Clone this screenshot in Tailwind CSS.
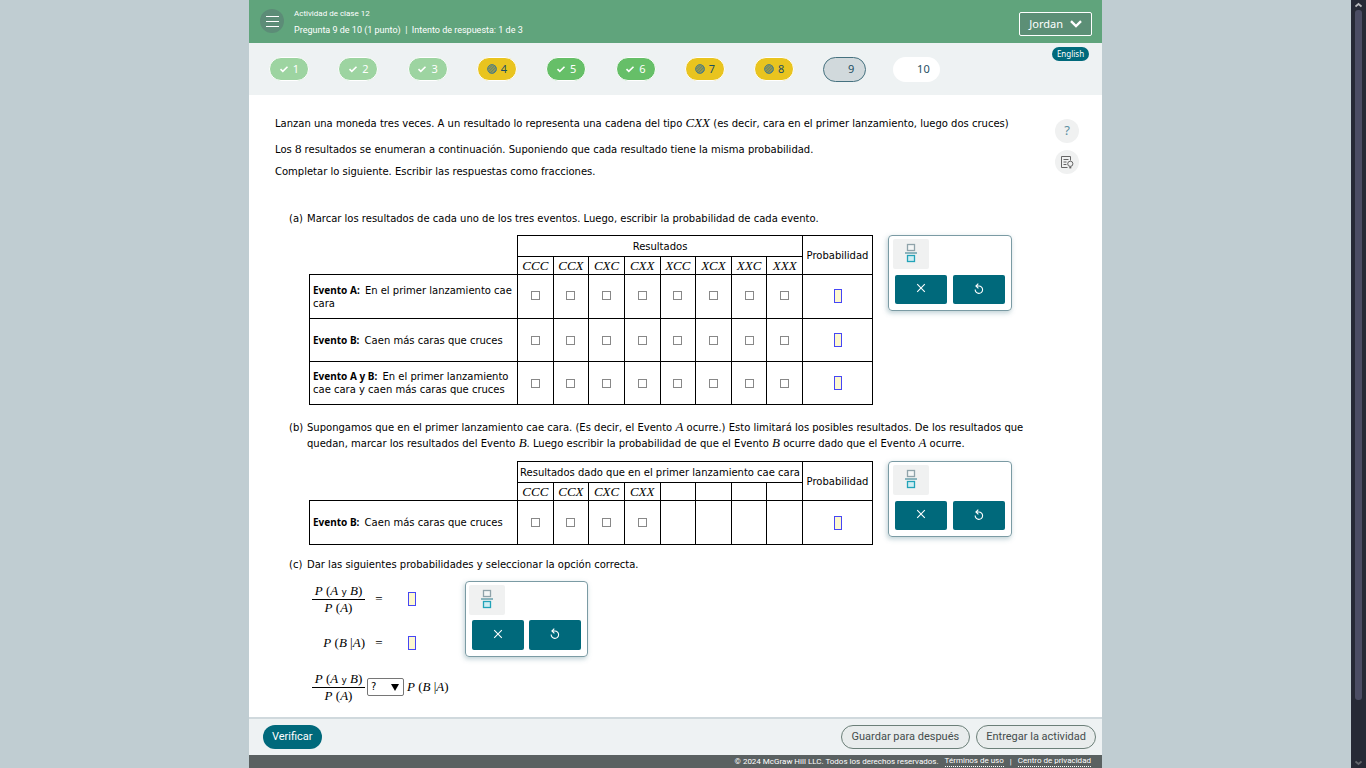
<!DOCTYPE html>
<html lang="es">
<head>
<meta charset="utf-8">
<meta name="viewport" content="width=device-width, initial-scale=1">
<title>Actividad de clase 12</title>
<script src="https://cdn.jsdelivr.net/npm/@tailwindcss/browser@4"></script>
</head>
<body class="flex h-screen bg-[#c0cdd2] font-['DejaVu_Sans',sans-serif] text-[10px] text-black">
<svg class="hidden" aria-hidden="true">
  <symbol id="check" viewBox="0 0 10 8"><path d="M1.500 4.200l2.300 2.100L8.500 1.700" fill="none" stroke="currentColor" stroke-width="1.600"/></symbol>
  <symbol id="hatch" viewBox="0 0 10 10"><circle cx="5" cy="5" r="4.4" fill="#9b9b4c" stroke="#4d7d83"/><path d="M1.5 5L5 1.5M1.3 8L8 1.3M3 9.2L9.2 3M6 9.2L9.2 6" stroke="#4d7d83" stroke-width=".9"/></symbol>
  <symbol id="frac" viewBox="0 0 12 20"><rect x="2.5" y="1.5" width="7" height="6" fill="#f4f6f6" stroke="#8fa3aa" stroke-width="1.3"/><path d="M0 10h12" stroke="#5f9aa6" stroke-width="1.4"/><rect x="2.5" y="12.5" width="7" height="6" fill="#cfeef3" stroke="#22a3b8" stroke-width="1.3"/></symbol>
  <symbol id="cross" viewBox="0 0 10 10"><path d="M1.2 1.2l7.6 7.6M8.8 1.2L1.2 8.8" stroke="currentColor" stroke-width="1.1"/></symbol>
  <symbol id="undo" viewBox="0 0 10 11"><path d="M1.200 6.500a3.700 3.700 0 1 0 3.700-3.500H2M4.300.6L1.900 3l2.500 2.400" fill="none" stroke="currentColor" stroke-width="1.1"/></symbol>
</svg>

<div class="flex h-full min-w-0 flex-1 justify-center">
<div class="flex h-full w-full max-w-[853px] flex-col bg-white">

  <header class="flex h-[43px] shrink-0 items-center bg-[#60a47c] pr-[10px] pl-[11px] font-['Roboto',sans-serif] text-white">
    <button aria-label="Menú" class="mb-[1px] flex size-6 items-center justify-center rounded-full bg-[#5c8c77]">
      <svg class="size-[13px]" viewBox="0 0 13 13"><path d="M0 1.500h13M0 6.500h13M0 11.500h13" stroke="#fff" stroke-width="1.2"/></svg>
    </button>
    <div class="ml-[10px] flex-1 leading-4">
      <h1 class="text-[8px]">Actividad de clase 12</h1>
      <p class="text-[9px]">Pregunta 9 de 10 (1 punto) &nbsp;|&nbsp; Intento de respuesta: 1 de 3</p>
    </div>
    <button class="mt-[5px] flex h-6 items-center gap-[7px] rounded-[2px] border border-white bg-[#5c8f76] px-[9px] font-['Noto_Sans',sans-serif] text-[11px]">Jordan
      <svg class="h-2 w-3" viewBox="0 0 12 8"><path d="M1 1.2l5 4.8 5-4.8" fill="none" stroke="#fff" stroke-width="2.4"/></svg>
    </button>
  </header>

  <nav aria-label="Preguntas" class="flex h-[52px] shrink-0 justify-between bg-[#eef2f3] pr-[13px] pl-[20px] font-['Noto_Sans',sans-serif] text-[11px]">
    <div class="grid w-[693px] grid-cols-10 items-center justify-items-start">
      <a href="#" class="flex h-6 w-10 items-center justify-center gap-1 rounded-full border border-white bg-[#9dd4a1] text-white"><svg class="h-2 w-[10px]"><use href="#check"/></svg>1</a>
      <a href="#" class="flex h-6 w-10 items-center justify-center gap-1 rounded-full border border-white bg-[#9dd4a1] text-white"><svg class="h-2 w-[10px]"><use href="#check"/></svg>2</a>
      <a href="#" class="flex h-6 w-10 items-center justify-center gap-1 rounded-full border border-white bg-[#9dd4a1] text-white"><svg class="h-2 w-[10px]"><use href="#check"/></svg>3</a>
      <a href="#" class="flex h-6 w-10 items-center justify-center gap-1 rounded-full border border-white bg-[#e9c41f] text-[#1d4f63]"><svg class="size-[10px]"><use href="#hatch"/></svg>4</a>
      <a href="#" class="flex h-6 w-10 items-center justify-center gap-1 rounded-full border border-white bg-[#66bf68] text-white"><svg class="h-2 w-[10px]"><use href="#check"/></svg>5</a>
      <a href="#" class="flex h-6 w-10 items-center justify-center gap-1 rounded-full border border-white bg-[#66bf68] text-white"><svg class="h-2 w-[10px]"><use href="#check"/></svg>6</a>
      <a href="#" class="flex h-6 w-10 items-center justify-center gap-1 rounded-full border border-white bg-[#e9c41f] text-[#1d4f63]"><svg class="size-[10px]"><use href="#hatch"/></svg>7</a>
      <a href="#" class="flex h-6 w-10 items-center justify-center gap-1 rounded-full border border-white bg-[#e9c41f] text-[#1d4f63]"><svg class="size-[10px]"><use href="#hatch"/></svg>8</a>
      <a href="#" aria-current="page" class="flex h-[25px] w-[43px] items-center justify-end rounded-full border border-[#45717f] bg-[#d1d9dc] pr-[11px] text-[#1d4f63]">9</a>
      <a href="#" class="flex h-[25px] w-[47px] items-center justify-end rounded-full bg-white pr-[10px] text-[#1d4f63]">10</a>
    </div>
    <button class="mt-1 flex h-[14px] w-[37px] items-center justify-center rounded-full bg-[#00697b] text-[8px] text-white">English</button>
  </nav>

  <main class="flex min-h-0 flex-1 overflow-hidden pr-[23px] pl-[26px]">
    <div class="min-w-0 flex-1 pt-4 leading-4">
      <p class="leading-[26px] whitespace-nowrap">Lanzan una moneda tres veces. A un resultado lo representa una cadena del tipo <i class="font-['Liberation_Serif',serif] text-[13px] leading-none">CXX</i> (es decir, cara en el primer lanzamiento, luego dos cruces)</p>
      <p class="leading-[26px]">Los <span class="font-['Liberation_Serif',serif] text-[13px] leading-none">8</span> resultados se enumeran a continuación. Suponiendo que cada resultado tiene la misma probabilidad.</p>
      <p class="leading-[18px]">Completar lo siguiente. Escribir las respuestas como fracciones.</p>

      <section class="mt-[30px] flex pl-[14px]">
        <span class="w-[18px] shrink-0">(a)</span>
        <div>
          <p>Marcar los resultados de cada uno de los tres eventos. Luego, escribir la probabilidad de cada evento.</p>
          <div class="mt-2 flex items-start gap-[15px] pl-[2px]">
            <table class="w-[564px] shrink-0 table-fixed border-collapse text-center leading-[13px] [&_th]:p-0 [&_th]:font-normal [&_b]:mr-[2px] [&_b]:font-['Noto_Sans',sans-serif] [&_b]:leading-none [&_td]:border [&_td]:border-black [&_td]:p-0">
              <colgroup><col class="w-[208px]"><col span="8"><col class="w-[70px]"></colgroup>
              <thead class="[&_th]:border-black">
                <tr class="h-[21px]"><th rowspan="2"></th><th colspan="8" class="border">Resultados</th><th rowspan="2" class="border">Probabilidad</th></tr>
                <tr class="h-[18px] font-['Liberation_Serif',serif] text-[13px] italic [&_th]:border"><th>CCC</th><th>CCX</th><th>CXC</th><th>CXX</th><th>XCC</th><th>XCX</th><th>XXC</th><th>XXX</th></tr>
              </thead>
              <tbody class="[&_input]:mx-auto [&_input]:block [&_input]:appearance-none [&_input]:border">
                <tr class="h-11 [&_td]:pb-[2px] [&_[type=checkbox]]:size-[9px] [&_[type=checkbox]]:border-[#888] [&_[type=text]]:h-[14px] [&_[type=text]]:w-[8px] [&_[type=text]]:border-[#4646f5] [&_[type=text]]:bg-[#fdf8cf]">
                  <th scope="row" class="border border-black text-left"><div class="pl-[3px]"><b>Evento A:</b> En el primer lanzamiento cae cara</div></th>
                  <td><input type="checkbox" aria-label="Evento A, CCC"></td><td><input type="checkbox" aria-label="Evento A, CCX"></td><td><input type="checkbox" aria-label="Evento A, CXC"></td><td><input type="checkbox" aria-label="Evento A, CXX"></td><td><input type="checkbox" aria-label="Evento A, XCC"></td><td><input type="checkbox" aria-label="Evento A, XCX"></td><td><input type="checkbox" aria-label="Evento A, XXC"></td><td><input type="checkbox" aria-label="Evento A, XXX"></td>
                  <td><input type="text" aria-label="Probabilidad del evento A"></td>
                </tr>
                <tr class="h-[43px] [&_[type=checkbox]]:size-[9px] [&_[type=checkbox]]:border-[#888] [&_[type=text]]:h-[14px] [&_[type=text]]:w-[8px] [&_[type=text]]:border-[#4646f5] [&_[type=text]]:bg-[#fdf8cf]">
                  <th scope="row" class="border border-black text-left"><div class="pl-[3px]"><b>Evento B:</b> Caen más caras que cruces</div></th>
                  <td><input type="checkbox" aria-label="Evento B, CCC"></td><td><input type="checkbox" aria-label="Evento B, CCX"></td><td><input type="checkbox" aria-label="Evento B, CXC"></td><td><input type="checkbox" aria-label="Evento B, CXX"></td><td><input type="checkbox" aria-label="Evento B, XCC"></td><td><input type="checkbox" aria-label="Evento B, XCX"></td><td><input type="checkbox" aria-label="Evento B, XXC"></td><td><input type="checkbox" aria-label="Evento B, XXX"></td>
                  <td><input type="text" aria-label="Probabilidad del evento B"></td>
                </tr>
                <tr class="h-[43px] [&_[type=checkbox]]:size-[9px] [&_[type=checkbox]]:border-[#888] [&_[type=text]]:h-[14px] [&_[type=text]]:w-[8px] [&_[type=text]]:border-[#4646f5] [&_[type=text]]:bg-[#fdf8cf]">
                  <th scope="row" class="border border-black text-left"><div class="pl-[3px]"><b>Evento A y B:</b> En el primer lanzamiento cae cara y caen más caras que cruces</div></th>
                  <td><input type="checkbox" aria-label="Evento A y B, CCC"></td><td><input type="checkbox" aria-label="Evento A y B, CCX"></td><td><input type="checkbox" aria-label="Evento A y B, CXC"></td><td><input type="checkbox" aria-label="Evento A y B, CXX"></td><td><input type="checkbox" aria-label="Evento A y B, XCC"></td><td><input type="checkbox" aria-label="Evento A y B, XCX"></td><td><input type="checkbox" aria-label="Evento A y B, XXC"></td><td><input type="checkbox" aria-label="Evento A y B, XXX"></td>
                  <td><input type="text" aria-label="Probabilidad del evento A y B"></td>
                </tr>
              </tbody>
            </table>
            <div class="w-[124px] shrink-0 rounded-[4px] border border-[#7b9ba4] pt-[3px] pb-[6px] pl-1 shadow-[-1px_2px_5px_rgba(70,120,135,0.35)]">
              <button aria-label="Fracción" class="flex h-[30px] w-9 items-center justify-center rounded-[2px] bg-[#f0f1f1] pb-[2px]"><svg class="h-5 w-3"><use href="#frac"/></svg></button>
              <div class="mt-[6px] flex gap-[6px] pl-[2px] text-white">
                <button aria-label="Borrar" class="flex h-[29px] w-[52px] items-center justify-center rounded-[2px] bg-[#00697b] pb-[3px]"><svg class="size-[10px]"><use href="#cross"/></svg></button>
                <button aria-label="Deshacer" class="flex h-[29px] w-[52px] items-center justify-center rounded-[2px] bg-[#00697b] pb-[3px]"><svg class="h-[11px] w-[10px]"><use href="#undo"/></svg></button>
              </div>
            </div>
          </div>
        </div>
      </section>

      <section class="mt-[15px] flex pl-[14px]">
        <span class="w-[18px] shrink-0">(b)</span>
        <div>
          <p class="whitespace-nowrap [&_i]:font-['Liberation_Serif',serif] [&_i]:text-[13px] [&_i]:leading-none">Supongamos que en el primer lanzamiento cae cara. (Es decir, el Evento <i>A</i> ocurre.) Esto limitará los posibles resultados. De los resultados que<br>quedan, marcar los resultados del Evento <i>B</i>. Luego escribir la probabilidad de que el Evento <i>B</i> ocurre dado que el Evento <i>A</i> ocurre.</p>
          <div class="mt-[9px] flex items-start gap-[15px] pl-[2px]">
            <table class="w-[564px] shrink-0 table-fixed border-collapse text-center leading-[13px] [&_th]:p-0 [&_th]:font-normal [&_b]:mr-[2px] [&_b]:font-['Noto_Sans',sans-serif] [&_b]:leading-none [&_td]:border [&_td]:border-black [&_td]:p-0">
              <colgroup><col class="w-[208px]"><col span="8"><col class="w-[70px]"></colgroup>
              <thead class="[&_th]:border-black">
                <tr class="h-[21px]"><th rowspan="2"></th><th colspan="8" class="border whitespace-nowrap">Resultados dado que en el primer lanzamiento cae cara</th><th rowspan="2" class="border">Probabilidad</th></tr>
                <tr class="h-[18px] font-['Liberation_Serif',serif] text-[13px] italic [&_th]:border"><th>CCC</th><th>CCX</th><th>CXC</th><th>CXX</th><th></th><th></th><th></th><th></th></tr>
              </thead>
              <tbody class="[&_input]:mx-auto [&_input]:block [&_input]:appearance-none [&_input]:border">
                <tr class="h-11 [&_[type=checkbox]]:size-[9px] [&_[type=checkbox]]:border-[#888] [&_[type=text]]:h-[14px] [&_[type=text]]:w-[8px] [&_[type=text]]:border-[#4646f5] [&_[type=text]]:bg-[#fdf8cf]">
                  <th scope="row" class="border border-black text-left"><div class="pl-[3px]"><b>Evento B:</b> Caen más caras que cruces</div></th>
                  <td><input type="checkbox" aria-label="Evento B dado A, CCC"></td><td><input type="checkbox" aria-label="Evento B dado A, CCX"></td><td><input type="checkbox" aria-label="Evento B dado A, CXC"></td><td><input type="checkbox" aria-label="Evento B dado A, CXX"></td><td></td><td></td><td></td><td></td>
                  <td><input type="text" aria-label="Probabilidad del evento B dado A"></td>
                </tr>
              </tbody>
            </table>
            <div class="w-[124px] shrink-0 rounded-[4px] border border-[#7b9ba4] pt-[3px] pb-[6px] pl-1 shadow-[-1px_2px_5px_rgba(70,120,135,0.35)]">
              <button aria-label="Fracción" class="flex h-[30px] w-9 items-center justify-center rounded-[2px] bg-[#f0f1f1] pb-[2px]"><svg class="h-5 w-3"><use href="#frac"/></svg></button>
              <div class="mt-[6px] flex gap-[6px] pl-[2px] text-white">
                <button aria-label="Borrar" class="flex h-[29px] w-[52px] items-center justify-center rounded-[2px] bg-[#00697b] pb-[3px]"><svg class="size-[10px]"><use href="#cross"/></svg></button>
                <button aria-label="Deshacer" class="flex h-[29px] w-[52px] items-center justify-center rounded-[2px] bg-[#00697b] pb-[3px]"><svg class="h-[11px] w-[10px]"><use href="#undo"/></svg></button>
              </div>
            </div>
          </div>
        </div>
      </section>

      <section class="mt-3 flex pl-[14px]">
        <span class="w-[18px] shrink-0">(c)</span>
        <div>
          <p>Dar las siguientes probabilidades y seleccionar la opción correcta.</p>
          <div class="mt-1 flex items-start pl-[5px] font-['Liberation_Serif',serif] text-[13px] [&_i]:leading-none">
            <div class="w-[135px] shrink-0">
              <div class="flex h-11 items-center">
                <div class="w-[53px] shrink-0 text-center leading-4"><div class="border-b border-black whitespace-nowrap"><i>P</i> (<i>A</i> <span class="font-['DejaVu_Sans',sans-serif] text-[9px] leading-none">y</span> <i>B</i>)</div><div><i>P</i> (<i>A</i>)</div></div>
                <span class="w-[28px] text-center">=</span>
                <input type="text" aria-label="P(A y B) entre P(A)" class="ml-[15px] block h-[14px] w-[8px] border border-[#4646f5] bg-[#fdf8cf]">
              </div>
              <div class="flex h-11 items-center">
                <div class="w-[53px] shrink-0 text-right whitespace-nowrap"><i>P</i> (<i>B</i> |<i>A</i>)</div>
                <span class="w-[28px] text-center">=</span>
                <input type="text" aria-label="P(B|A)" class="ml-[15px] block h-[14px] w-[8px] border border-[#4646f5] bg-[#fdf8cf]">
              </div>
              <div class="flex h-11 items-center">
                <div class="w-[53px] shrink-0 text-center leading-4"><div class="border-b border-black whitespace-nowrap"><i>P</i> (<i>A</i> <span class="font-['DejaVu_Sans',sans-serif] text-[9px] leading-none">y</span> <i>B</i>)</div><div><i>P</i> (<i>A</i>)</div></div>
                <div class="relative ml-[2px] shrink-0">
                  <select aria-label="Comparación" class="block h-[18px] w-[37px] appearance-none rounded-[2px] border border-[#767676] bg-white pl-[3px] font-['DejaVu_Sans',sans-serif] text-[10px] leading-4"><option>?</option><option>=</option><option>≠</option></select>
                  <svg class="pointer-events-none absolute top-[6px] right-[5px] h-[7px] w-2" viewBox="0 0 8 7"><path d="M0 0h8L4 7z"/></svg>
                </div>
                <div class="ml-[3px] whitespace-nowrap"><i>P</i> (<i>B</i> |<i>A</i>)</div>
              </div>
            </div>
            <div class="mt-[4px] ml-[18px] w-[123px] shrink-0 rounded-[4px] border border-[#7b9ba4] pt-[3px] pb-[6px] pl-[3px] shadow-[-1px_2px_5px_rgba(70,120,135,0.35)]">
              <button aria-label="Fracción" class="flex h-[30px] w-9 items-center justify-center rounded-[2px] bg-[#f0f1f1] pb-[2px]"><svg class="h-5 w-3"><use href="#frac"/></svg></button>
              <div class="mt-[5px] flex gap-[5px] pl-[3px] text-white">
                <button aria-label="Borrar" class="flex h-[30px] w-[52px] items-center justify-center rounded-[2px] bg-[#00697b] pb-[3px]"><svg class="size-[10px]"><use href="#cross"/></svg></button>
                <button aria-label="Deshacer" class="flex h-[30px] w-[52px] items-center justify-center rounded-[2px] bg-[#00697b] pb-[3px]"><svg class="h-[11px] w-[10px]"><use href="#undo"/></svg></button>
              </div>
            </div>
          </div>
        </div>
      </section>
    </div>
    <aside class="flex shrink-0 flex-col gap-[7px] pt-6">
      <button aria-label="Ayuda" class="flex size-6 items-center justify-center rounded-full bg-[#f0f1f1] font-['Noto_Sans',sans-serif] text-[13px] text-[#5e90a2]">?</button>
      <button aria-label="Recursos" class="flex size-6 items-center justify-center rounded-full bg-[#f0f1f1]">
        <svg class="size-[13px]" viewBox="0 0 13 13" fill="none" stroke="#666"><path d="M9.500 4.500v-4H.500v11h6M2.500 3.500h5M2.500 6h3M2.500 8.500h3"/><circle cx="9.300" cy="7.800" r="2.600"/><path d="M8.300 11.500h2" stroke-width="1.800"/></svg>
      </button>
    </aside>
  </main>

  <div class="flex h-[38px] shrink-0 items-center gap-[6px] border-t-2 border-[#d0d9dd] bg-[#eef2f3] pr-[6px] pl-[14px] font-['Roboto',sans-serif] text-[11px] text-[#454c4c]">
    <button class="mr-auto h-6 rounded-full bg-[#00697b] px-[9px] pt-[1px] text-white">Verificar</button>
    <button class="h-6 rounded-full border border-[#6b7f78] bg-[#e8ecec] px-[10px] pt-[1px]">Guardar para después</button>
    <button class="h-6 rounded-full border border-[#6b7f78] bg-[#e8ecec] px-[9px] pt-[1px]">Entregar la actividad</button>
  </div>
  <footer class="flex h-[13px] shrink-0 items-center justify-end gap-[6px] bg-[#5a6161] pr-[11px] font-['Roboto',sans-serif] text-[8px] leading-[10px] text-white">
    <span>© 2024 McGraw Hill LLC. Todos los derechos reservados.</span>
    <a href="#" class="border-b border-dotted">Términos de uso</a><span>|</span><a href="#" class="border-b border-dotted">Centro de privacidad</a>
  </footer>
</div>
</div>

<div aria-hidden="true" class="flex h-full w-[15px] shrink-0 flex-col items-center bg-[#262a36] pt-[2px] pb-[2px]">
  <svg class="h-[6px] w-[7px]" viewBox="0 0 7 6"><path d="M.5 4.500l3-2.500 3 2.500" fill="none" stroke="#b8babd" stroke-width="1.800"/></svg>
  <div class="mt-[2px] w-[7px] grow-[688] rounded-[3px] bg-[#4b4d64]"></div>
  <div class="grow-[60]"></div>
  <svg class="h-[6px] w-[7px]" viewBox="0 0 7 6"><path d="M.5 1.500l3 2.500 3-2.500" fill="none" stroke="#63666c" stroke-width="1.800"/></svg>
</div>
</body>
</html>
